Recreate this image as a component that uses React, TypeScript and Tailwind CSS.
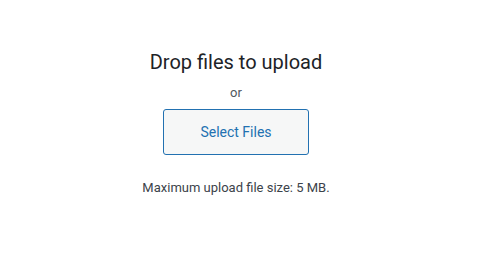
export default function App() {
  return (
    <div
      className="w-[480px] h-[270px] bg-white flex flex-col items-center pr-[8px]"
      style={{ fontFamily: "Roboto, 'Liberation Sans', sans-serif" }}
    >
      <p className="mt-[48px] text-[20px] leading-[28px] text-[#1d2327]">Drop files to upload</p>
      <p className="mt-[7px] text-[13px] leading-[20px] text-[#50575e]">or</p>
      <button
        type="button"
        className="mt-[6px] w-[146px] h-[46px] rounded-[3px] border border-[#2271b1] bg-[#f6f7f7] text-[14px] text-[#2271b1]"
      >
        Select Files
      </button>
      <p className="mt-[23px] text-[13px] leading-[20px] text-[#3c434a]">Maximum upload file size: 5 MB.</p>
    </div>
  )
}
